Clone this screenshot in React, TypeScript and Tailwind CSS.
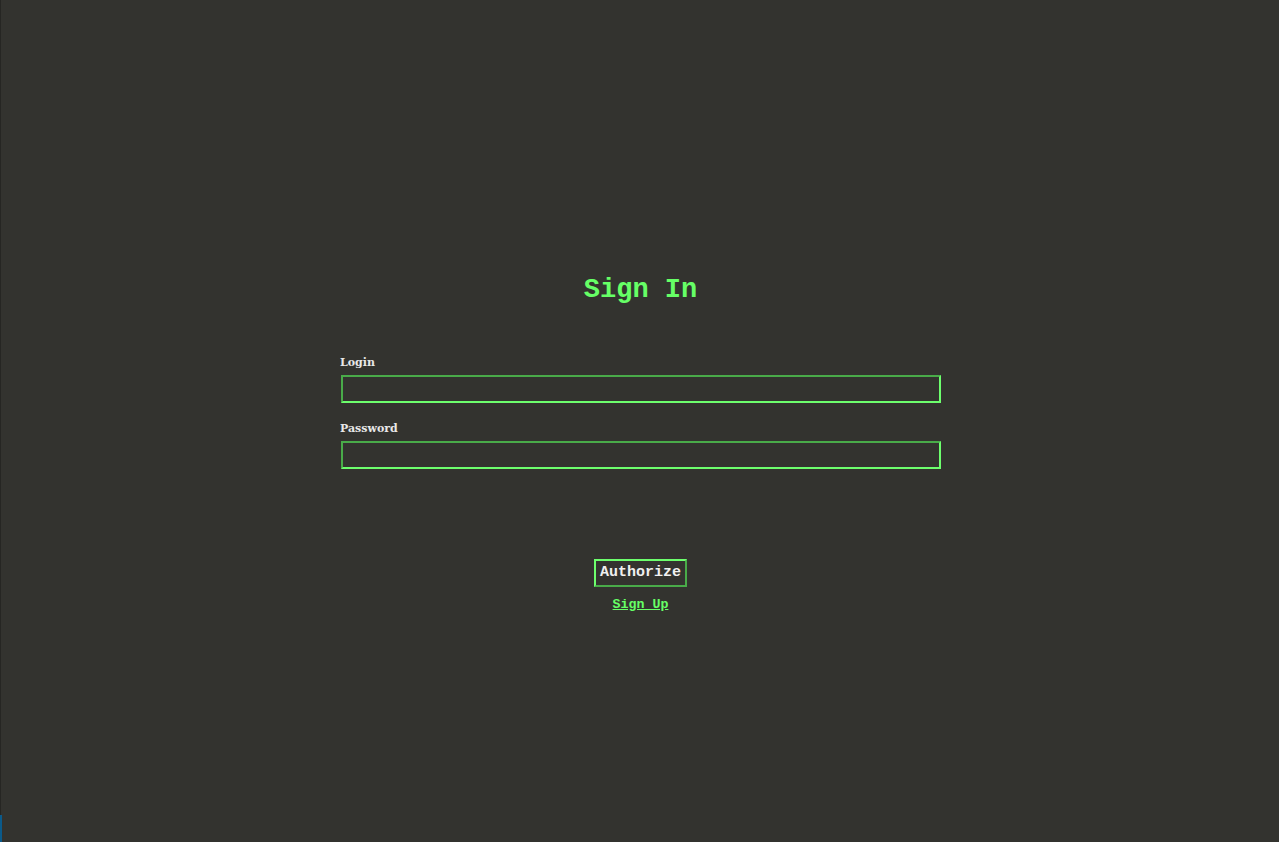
import React from "react";

export default function App() {
  return (
    <div className="min-h-[842px] w-full bg-[#33332f] relative font-['Liberation_Mono',monospace]">
      <div className="absolute inset-y-0 left-0 w-px bg-[#262623]" />
      <div className="flex flex-col items-center pt-[272px] pl-[2px]">
        <h1 className="text-[27px] leading-[36px] font-bold text-[#66ff66]">Sign In</h1>
        <form className="w-[601px] mt-[48px] flex flex-col" onSubmit={(e) => e.preventDefault()}>
          <label className="text-[11px] leading-[14px] font-bold text-[#e8e8e8] font-['DejaVu_Serif','Liberation_Serif',serif]">
            Login
          </label>
          <input
            type="text"
            className="ml-px mt-[5px] h-[28px] w-[600px] bg-transparent border-2 [border-style:inset] border-[#6dff6d] outline-none text-white px-1"
          />
          <label className="mt-[19px] text-[11px] leading-[14px] font-bold text-[#e8e8e8] font-['DejaVu_Serif','Liberation_Serif',serif]">
            Password
          </label>
          <input
            type="password"
            className="ml-px mt-[5px] h-[28px] w-[600px] bg-transparent border-2 [border-style:inset] border-[#6dff6d] outline-none text-white px-1"
          />
        </form>
        <button className="mt-[90px] h-[28px] w-[93px] bg-transparent border-2 [border-style:outset] border-[#6dff6d] text-[15px] font-bold text-[#f0f0f0] leading-[20px] font-['Liberation_Mono',monospace]">
          Authorize
        </button>
        <a href="#" className="mt-[10px] text-[13.3px] leading-[16px] font-bold text-[#66ff66] underline">
          Sign Up
        </a>
      </div>
      <div className="absolute left-0 bottom-0 w-[2px] h-[27px] bg-[#0b5a8a]" />
    </div>
  );
}
